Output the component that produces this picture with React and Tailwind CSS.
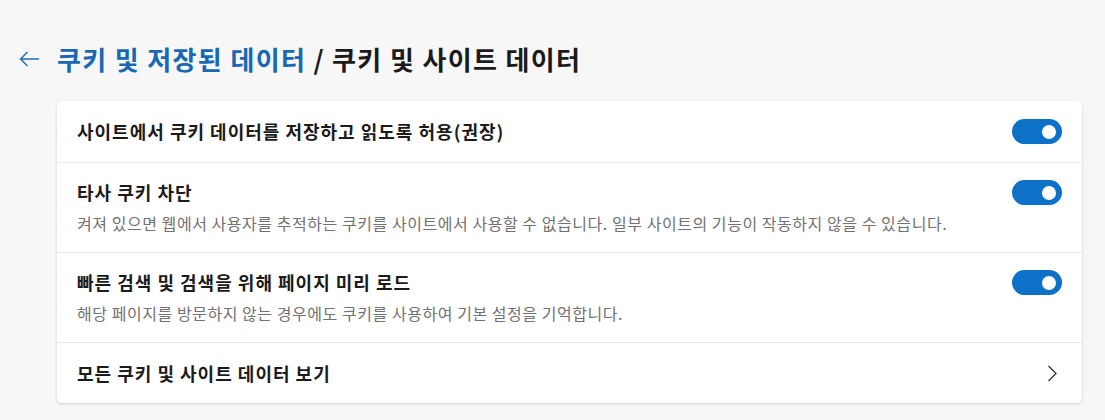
import React, { useState } from 'react';

const FONT = { fontFamily: '"Noto Sans CJK KR", "Noto Sans", sans-serif' };

function Toggle({ on, onChange }) {
  return (
    <button
      onClick={() => onChange(!on)}
      className={`relative shrink-0 w-[50px] h-[25px] rounded-full flex items-center ${on ? 'bg-[#0c71c7] justify-end' : 'bg-white border border-[#767676] justify-start'}`}
    >
      <span className={`block w-[14px] h-[14px] rounded-full ${on ? 'bg-white mr-[6px]' : 'bg-[#616161] ml-[6px]'}`}></span>
    </button>
  );
}

function SettingRow({ title, desc, on, onChange, first }) {
  return (
    <div className={`flex items-start justify-between px-5 ${first ? '' : 'border-t border-[#e9e9e9]'} ${desc ? 'pt-[17px] pb-[19px]' : 'py-[18px]'}`}>
      <div>
        <div className="text-[18px] leading-6 font-bold tracking-[1px] text-[#1b1b1b]">{title}</div>
        {desc && <div className="mt-[9px] text-[16px] leading-5 tracking-[0.55px] text-[#727272]">{desc}</div>}
      </div>
      <Toggle on={on} onChange={onChange} />
    </div>
  );
}

export default function App() {
  const [allow, setAllow] = useState(true);
  const [block, setBlock] = useState(true);
  const [preload, setPreload] = useState(true);

  return (
    <div className="min-h-screen bg-[#f7f7f7] pt-[42px] pb-4" style={FONT}>
      <header className="flex items-center h-[34px] pl-[19px]">
        <button className="text-[#1a6fb8] mr-[17px]">
          <svg width="21" height="16" viewBox="0 0 21 16" fill="none" stroke="currentColor" strokeWidth="1.4">
            <path d="M20 8H1.5M8.5 1L1.5 8l7 7" />
          </svg>
        </button>
        <h1 className="text-[26px] font-bold leading-[34px] tracking-[1.35px]">
          <span className="text-[#1868b3]">쿠키 및 저장된 데이터</span>
          <span className="text-[#1b1b1b]"> / 쿠키 및 사이트 데이터</span>
        </h1>
      </header>

      <main className="ml-[57px] mr-[23px] mt-[25px] bg-white rounded-[5px] shadow-[0_1px_3px_rgba(0,0,0,0.16)]">
        <SettingRow first title="사이트에서 쿠키 데이터를 저장하고 읽도록 허용(권장)" on={allow} onChange={setAllow} />
        <SettingRow
          title="타사 쿠키 차단"
          desc="켜져 있으면 웹에서 사용자를 추적하는 쿠키를 사이트에서 사용할 수 없습니다. 일부 사이트의 기능이 작동하지 않을 수 있습니다."
          on={block}
          onChange={setBlock}
        />
        <SettingRow
          title="빠른 검색 및 검색을 위해 페이지 미리 로드"
          desc="해당 페이지를 방문하지 않는 경우에도 쿠키를 사용하여 기본 설정을 기억합니다."
          on={preload}
          onChange={setPreload}
        />
        <div className="flex items-center justify-between px-5 h-[61px] border-t border-[#e9e9e9]">
          <div className="text-[18px] leading-6 font-bold tracking-[1px] text-[#1b1b1b]">모든 쿠키 및 사이트 데이터 보기</div>
          <svg width="10" height="17" viewBox="0 0 10 17" fill="none" stroke="#333" strokeWidth="1.3" className="mr-[5px]">
            <path d="M1.5 1l7.5 7.5L1.5 16" />
          </svg>
        </div>
      </main>
    </div>
  );
}
